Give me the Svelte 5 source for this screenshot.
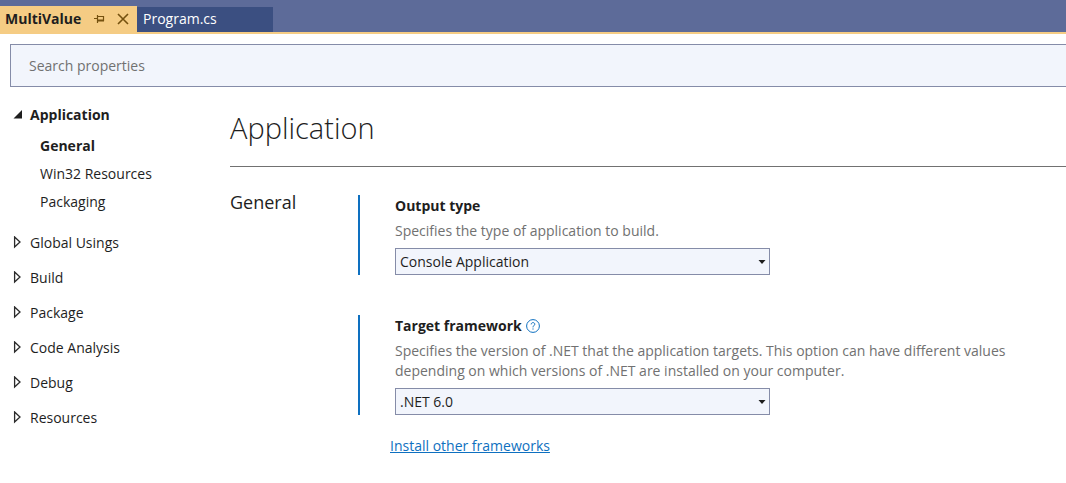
<script>
  let query = $state('');
  let outputType = $state('Console Application');
  let framework = $state('.NET 6.0');

  const pages = ['General', 'Win32 Resources', 'Packaging'];
  const groups = ['Global Usings', 'Build', 'Package', 'Code Analysis', 'Debug', 'Resources'];
</script>

<div class="window">
  <header class="tabs">
    <div class="tab active">
      <span class="name">MultiValue</span>
      <button class="icon pin" aria-label="Pin tab">
        <svg width="12" height="10" viewBox="0 0 12 10" fill="none" stroke="#75510f">
          <path d="M1 4.5H4.5M4.5 1V9M4.5 2.5H10.5V7" stroke-width="1.2" />
          <path d="M4.5 6.5H11" stroke-width="2" />
        </svg>
      </button>
      <button class="icon" aria-label="Close tab">
        <svg width="12" height="12" viewBox="0 0 12 12" fill="none" stroke="#75510f" stroke-width="1.6">
          <path d="M1 1L11 11M11 1L1 11" />
        </svg>
      </button>
    </div>
    <button class="tab idle">Program.cs</button>
  </header>

  <div class="search">
    <input type="text" aria-label="Search properties" placeholder="Search properties" bind:value={query} />
  </div>

  <div class="body">
    <nav aria-label="Property pages">
      <button class="group open">
        <svg width="10" height="10" viewBox="0 0 10 10"><path d="M9 0V8.5H0.5Z" fill="#1e1e1e" /></svg>
        Application
      </button>
      <div class="pages">
        {#each pages as page, i}
          <button class="page" class:current={i === 0}>{page}</button>
        {/each}
      </div>
      {#each groups as group}
        <button class="group">
          <svg width="10" height="14" viewBox="0 0 10 14"><path d="M1.6 1L7 6L1.6 11Z" fill="none" stroke="#2b2b2b" stroke-width="1.3" /></svg>
          {group}
        </button>
      {/each}
    </nav>

    <main>
      <h1>Application</h1>
      <section>
        <h2>General</h2>
        <div class="settings">
          <div class="setting">
            <div class="title"><label for="output">Output type</label></div>
            <p>Specifies the type of application to build.</p>
            <div class="drop">
              <select id="output" bind:value={outputType}>
                <option>Console Application</option>
                <option>Windows Application</option>
                <option>Class Library</option>
              </select>
              <svg class="arrow" width="8" height="4" viewBox="0 0 8 4"><path d="M0.5 0H7.5L4 4Z" fill="#1e1e1e" /></svg>
            </div>
          </div>
          <div class="setting">
            <div class="title">
              <label for="framework">Target framework</label>
              <button class="icon" aria-label="Help">
                <svg width="14" height="14" viewBox="0 0 14 14" fill="none" stroke="#0e70c0">
                  <circle cx="7" cy="7" r="6.4" />
                  <path d="M5.2 5.4C5.2 4.3 6 3.6 7 3.6C8.1 3.6 8.8 4.3 8.8 5.2C8.8 6.5 7 6.6 7 8.4M7 9.4V10.6" />
                </svg>
              </button>
            </div>
            <p>Specifies the version of .NET that the application targets. This option can have different values depending on which versions of .NET are installed on your computer.</p>
            <div class="drop">
              <select id="framework" bind:value={framework}>
                <option>.NET 6.0</option>
                <option>.NET 5.0</option>
                <option>.NET Core 3.1</option>
              </select>
              <svg class="arrow" width="8" height="4" viewBox="0 0 8 4"><path d="M0.5 0H7.5L4 4Z" fill="#1e1e1e" /></svg>
            </div>
          </div>
          <a href="#frameworks">Install other frameworks</a>
        </div>
      </section>
    </main>
  </div>
</div>

<style>
  :global(body) {
    background: #fff;
  }
  .window {
    font: 14px/20px 'Segoe UI', 'Open Sans', 'Noto Sans', sans-serif;
    color: #1e1e1e;
    overflow: hidden;
  }
  button {
    font: inherit;
    color: inherit;
    background: none;
    border: 0;
    padding: 0;
    text-align: left;
  }
  svg {
    display: block;
    flex: none;
  }
  .tabs {
    display: flex;
    align-items: flex-end;
    height: 32px;
    background: #5d6b99;
    border-bottom: 2px solid #f5cc84;
  }
  .tab {
    display: flex;
    align-items: center;
    box-sizing: border-box;
    width: 136px;
    height: 25px;
    padding: 0 6px 2px;
  }
  .tab.active {
    width: 137px;
    height: 26px;
    padding: 0 8px 0 5px;
    background: #f5cc84;
    font-weight: 700;
  }
  .name {
    flex: 1;
  }
  .pin {
    margin-right: 12px;
  }
  .tab.idle {
    background: #3b4f81;
    color: #fff;
  }
  .search {
    margin: 10px 0 0 10px;
  }
  .search input {
    display: block;
    box-sizing: border-box;
    width: 100%;
    height: 43px;
    padding: 0 18px;
    font: inherit;
    color: inherit;
    background: #f2f5fc;
    border: 1px solid #858ca8;
    border-right: 0;
    border-radius: 0;
  }
  .search input::placeholder {
    color: #717171;
    opacity: 1;
  }
  .body {
    display: grid;
    grid-template-columns: 230px 1fr;
  }
  nav {
    display: flex;
    flex-direction: column;
    padding-top: 10px;
  }
  .group {
    display: flex;
    align-items: center;
    gap: 7px;
    height: 35px;
    padding-left: 13px;
  }
  .group.open {
    font-weight: 700;
  }
  .pages {
    display: flex;
    flex-direction: column;
    padding-bottom: 9px;
  }
  .page {
    height: 28px;
    padding-left: 40px;
  }
  .page.current {
    font-weight: 700;
  }
  h1 {
    margin: 0;
    padding: 21px 0 18px;
    font-size: 29px;
    line-height: 40px;
    font-weight: 300;
    border-bottom: 1px solid #717171;
  }
  section {
    display: grid;
    grid-template-columns: 128px 1fr;
    padding-top: 28px;
  }
  h2 {
    margin: 0;
    font-size: 18px;
    line-height: 14px;
    font-weight: 400;
  }
  .setting {
    box-sizing: border-box;
    padding-left: 35px;
    border-left: 2px solid #0e70c0;
  }
  .setting + .setting {
    margin-top: 40px;
  }
  .title {
    display: flex;
    align-items: center;
    gap: 4px;
    font-weight: 700;
    line-height: 22px;
  }
  p {
    margin: 0;
    padding: 4px 0 7px;
    max-width: 640px;
    color: #717171;
  }
  .drop {
    display: grid;
    align-items: center;
    max-width: 375px;
  }
  select {
    grid-area: 1 / 1;
    appearance: none;
    box-sizing: border-box;
    width: 100%;
    height: 27px;
    padding: 0 24px 0 4px;
    font: inherit;
    color: inherit;
    background: #f2f5fc;
    border: 1px solid #858ca8;
    border-radius: 0;
  }
  .arrow {
    grid-area: 1 / 1;
    justify-self: end;
    margin-right: 4px;
    pointer-events: none;
  }
  a {
    display: block;
    width: fit-content;
    margin: 21px 0 0 32px;
    color: #0e70c0;
  }
</style>
